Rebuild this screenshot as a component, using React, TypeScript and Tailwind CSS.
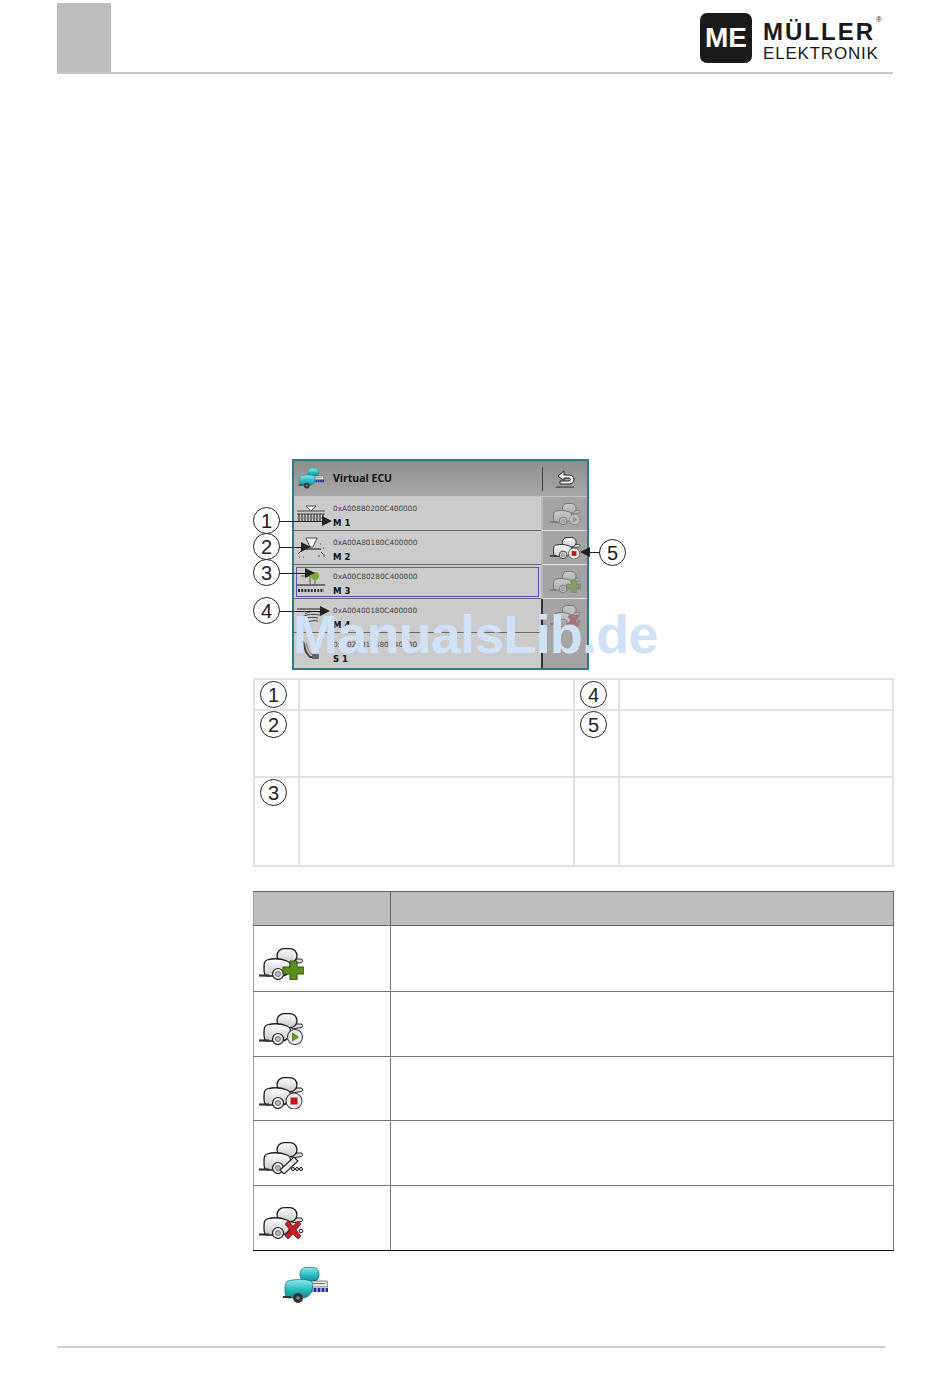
import React from "react";

type Badge = "plus" | "play" | "stop" | "machine" | "cross" | "none";

// grey tank used in the softkeys and the icon table
const TankIcon: React.FC<{ badge?: Badge; className?: string }> = ({ badge = "none", className }) => (
  <svg viewBox="0 0 45 32" className={className}>
    <defs>
      <linearGradient id="greyTank" x1="0" y1="0" x2="0" y2="1">
        <stop offset="0" stopColor="#ffffff" />
        <stop offset="1" stopColor="#c8c8c8" />
      </linearGradient>
    </defs>
    <path d="M31 11h11c2 0 2 3 .5 3.500L33 16z" fill="#ddd" stroke="#222" strokeWidth="1" />
    <rect x="18" y="0.700" width="20" height="14" rx="7" fill="url(#greyTank)" stroke="#1c1c1c" strokeWidth="1.300" />
    <path d="M8 12c7-2 15-1 20 1 3 1 4 4 3 7-1 5-4 8-9 8H8c-2 0-3-2-3-7 0-5 0-8 3-9z" fill="url(#greyTank)" stroke="#1c1c1c" strokeWidth="1.300" />
    <path d="M0 27.500h10" stroke="#333" strokeWidth="2.200" />
    <circle cx="19" cy="26" r="5.500" fill="#e4e4e4" stroke="#222" strokeWidth="1.200" />
    <circle cx="19" cy="26" r="2.500" fill="#bbb" stroke="#666" strokeWidth="0.8" />
    {badge === "plus" && (
      <path d="M31 13h7v6h7v7h-7v6h-7v-6h-7v-7h7z" fill="#5c8f1c" stroke="#2f5208" strokeWidth="1" />
    )}
    {badge === "play" && (
      <>
        <circle cx="36" cy="24" r="7.500" fill="#ececec" stroke="#444" strokeWidth="1.100" />
        <path d="M33.500 20l6 4-6 4z" fill="#6a9a22" stroke="#3b5f10" strokeWidth="0.6" />
      </>
    )}
    {badge === "stop" && (
      <>
        <circle cx="35" cy="24" r="8" fill="#efefef" stroke="#444" strokeWidth="1.100" />
        <rect x="31.500" y="20.500" width="7" height="7" fill="#c4161c" />
      </>
    )}
    {badge === "machine" && (
      <>
        <path d="M21 28l14-13 4 4-14 13z" fill="#ededed" stroke="#222" strokeWidth="1.100" />
        <circle cx="34" cy="27" r="1.500" fill="none" stroke="#111" strokeWidth="1" />
        <circle cx="38" cy="27" r="1.500" fill="none" stroke="#111" strokeWidth="1" />
        <circle cx="42" cy="27" r="1.500" fill="none" stroke="#111" strokeWidth="1" />
      </>
    )}
    {badge === "cross" && (
      <>
        <circle cx="42" cy="24" r="1.800" fill="none" stroke="#111" strokeWidth="1" />
        <path d="M26 17l3-3 5 5 5-5 3 3-5 6 5 6-3 3-5-5-5 5-3-3 5-6z" fill="#c4202a" stroke="#7c1016" strokeWidth="0.7" />
      </>
    )}
  </svg>
);

// teal tank with boom, app symbol
const ColorTank: React.FC<{ className?: string }> = ({ className }) => (
  <svg viewBox="0 0 45 37" className={className}>
    <defs>
      <linearGradient id="tealTank" x1="0" y1="0" x2="0" y2="1">
        <stop offset="0" stopColor="#8fe8ea" />
        <stop offset="0.5" stopColor="#2cc0c6" />
        <stop offset="1" stopColor="#0f8a92" />
      </linearGradient>
    </defs>
    <rect x="17" y="0.500" width="19" height="14" rx="6" fill="url(#tealTank)" stroke="#0d6f76" strokeWidth="0.7" />
    <path d="M26 14h18l1 6H26z" fill="#e6e6da" stroke="#555" strokeWidth="0.7" />
    <path d="M29 16.500h13" stroke="#777" strokeWidth="1" />
    <path d="M28 21v4M32 21v4M36 21v4M40 21v4M44 21v4" stroke="#1c2fa0" strokeWidth="3" />
    <path d="M5 14c7-2 18-2 23 0 2 1 2 5 1 9-1 5-5 8-10 8H7c-3 0-5-1-5-7 0-5 0-9 3-10z" fill="url(#tealTank)" stroke="#0d6f76" strokeWidth="0.7" />
    <path d="M0 30h8" stroke="#333" strokeWidth="2" />
    <circle cx="15" cy="31" r="5" fill="#333" />
    <circle cx="15" cy="31" r="1.800" fill="#888" />
  </svg>
);

const SeederIcon = () => (
  <svg viewBox="0 0 28 18" className="h-[18px] w-[28px]">
    <path d="M9 1h10l-5 5z" fill="#eee" stroke="#333" strokeWidth="0.8" />
    <path d="M0 6h28M0 9h28" stroke="#444" strokeWidth="1" />
    <path d="M2 9v8M5 9v8M8 9v8M11 9v8M14 9v8M17 9v8M20 9v8M23 9v8M26 9v8" stroke="#333" strokeWidth="1.200" />
    <path d="M0 13h28" stroke="#888" strokeWidth="1" />
  </svg>
);

const SpreaderIcon = () => (
  <svg viewBox="0 0 28 22" className="h-[22px] w-[28px]">
    <path d="M9 1h11l-4 9h-3z" fill="#f2f2f2" stroke="#444" strokeWidth="0.9" />
    <path d="M6 12h18" stroke="#444" strokeWidth="1.400" />
    <path d="M1 17l3-3M2 20h1M23 7h1M26 11h1M24 15l2 2M27 17v3M21 19h2M6 20h1" stroke="#444" strokeWidth="1" />
  </svg>
);

const TreeRowIcon = () => (
  <svg viewBox="0 0 28 22" className="h-[22px] w-[28px]">
    <circle cx="18" cy="5" r="4" fill="#78a92e" />
    <path d="M18 9v4M4 5h9v8" stroke="#555" strokeWidth="0.9" fill="none" />
    <path d="M0 14h28" stroke="#444" strokeWidth="1.400" />
    <path d="M1 19.500h26" stroke="#333" strokeWidth="3" strokeDasharray="2 1.200" />
  </svg>
);

const PloughIcon = () => (
  <svg viewBox="0 0 28 18" className="h-[18px] w-[28px]">
    <path d="M0 2h24" stroke="#777" strokeWidth="2" />
    <path d="M8 7c5-3 10-3 15-2M5 10c5-3 12-3 18-2M4 13c5-3 12-3 17-2M8 16c5-2 10-3 13-2" fill="none" stroke="#444" strokeWidth="1" />
  </svg>
);

const ArmIcon = () => (
  <svg viewBox="0 0 18 20" className="h-[20px] w-[18px]">
    <path d="M1 1l3 11 4 5h8" fill="none" stroke="#444" strokeWidth="2" />
    <path d="M4 3l3 9 4 3" fill="none" stroke="#888" strokeWidth="1.200" />
    <rect x="10" y="14" width="7" height="5" fill="#666" />
  </svg>
);

const BackIcon = () => (
  <svg viewBox="0 0 20 18" className="h-[18px] w-[20px]">
    <path d="M1 16.500h18" stroke="#222" strokeWidth="2" />
    <path d="M1 16h18" stroke="#f4f4f4" strokeWidth="0.800" />
    <path d="M9 1L3 6l6 4.500V8h4c2 0 2.500 1 2.500 1.500S15 11 13 11H5v3h9c3 0 5-2 5-4.500S17 5 14 5H9z" fill="#f4f4f4" stroke="#222" strokeWidth="1" />
  </svg>
);

const Num: React.FC<{ n: number; className?: string }> = ({ n, className }) => (
  <div className={`flex size-[27px] items-center justify-center rounded-full border border-[#222] bg-white font-['Liberation_Sans',sans-serif] text-[20px] leading-none text-[#222] ${className ?? ""}`}>
    {n}
  </div>
);

const ArrowHead: React.FC<{ className: string; left?: boolean }> = ({ className, left }) => (
  <svg viewBox="0 0 10 10" className={className}>
    <path d={left ? "M10 0v10L0 5z" : "M0 0v10l10-5z"} fill="#222" />
  </svg>
);

const rows = [
  { hex: "0xA00880200C400000", name: "M 1", icon: <SeederIcon /> },
  { hex: "0xA00A80180C400000", name: "M 2", icon: <SpreaderIcon /> },
  { hex: "0xA00C80280C400000", name: "M 3", icon: <TreeRowIcon />, selected: true },
  { hex: "0xA00400180C400000", name: "M 4", icon: <PloughIcon /> },
  { hex: "0xA020012480C40000", name: "S 1", icon: <ArmIcon /> },
];

const Screen = () => (
  <div className="ml-[39px] flex h-[211px] w-[297px] flex-col border-2 border-[#2a7f86]">
    <div className="flex h-[36px] items-center border-b border-[#c4c4c4] bg-gradient-to-b from-[#8e8e8e] to-[#a8a8a8]">
      <div className="mr-[5px] flex w-[34px] justify-center">
        <ColorTank className="h-[21px] w-[28px]" />
      </div>
      <div className="flex-1 font-['Open_Sans',sans-serif] text-[10.500px] font-bold text-[#111]">Virtual ECU</div>
      <div className="h-[24px] w-px bg-[#444]" />
      <div className="flex w-[44px] justify-center">
        <BackIcon />
      </div>
    </div>
    <div className="flex flex-1">
      <div className="flex flex-1 flex-col bg-[#cbcbcb]">
        {rows.map((r, i) => (
          <div
            key={r.name}
            className={`flex h-[34px] items-center ${i < 4 ? "border-b border-[#6a6a6a]" : ""} ${r.selected ? "outline outline-1 -outline-offset-3 outline-[#5b54c4]" : ""}`}
          >
            <div className="mr-[5px] flex w-[34px] justify-center">{r.icon}</div>
            <div className="flex flex-col pt-[4px]">
              <div className="font-['DejaVu_Sans',sans-serif] text-[7.300px] leading-[10px] text-[#444]">{r.hex}</div>
              <div className="mt-[4px] font-['DejaVu_Sans',sans-serif] text-[8.500px] font-bold leading-[10px] text-[#111]">{r.name}</div>
            </div>
          </div>
        ))}
      </div>
      <div className="flex w-[46px] flex-col bg-[#a5a3a3]">
        <div className="flex h-[34px] items-center justify-center border-b border-l-2 border-b-[#dedede] border-l-[#b8b8b8]">
          <TankIcon badge="play" className="h-[22px] w-[31px] opacity-40" />
        </div>
        <div className="flex h-[34px] items-center justify-center border-b border-l-2 border-b-[#dedede] border-l-[#b8b8b8]">
          <TankIcon badge="stop" className="h-[22px] w-[31px]" />
        </div>
        <div className="flex h-[34px] items-center justify-center border-b border-l-2 border-b-[#dedede] border-l-[#b8b8b8]">
          <TankIcon badge="plus" className="h-[22px] w-[31px] opacity-40" />
        </div>
        <div className="flex flex-1 flex-col border-l-2 border-l-[#333]">
          <div className="flex h-[34px] items-center justify-center">
            <TankIcon badge="cross" className="h-[22px] w-[31px] opacity-40" />
          </div>
        </div>
      </div>
    </div>
  </div>
);

const Callouts = () => (
  <>
    <Num n={1} className="absolute left-0 top-[48px]" />
    <div className="absolute left-[26px] top-[62px] h-px w-[44px] bg-[#222]" />
    <ArrowHead className="absolute left-[69px] top-[57px] size-[10px]" />

    <Num n={2} className="absolute left-0 top-[74px]" />
    <div className="absolute left-[26px] top-[88px] h-px w-[23px] bg-[#222]" />
    <ArrowHead className="absolute left-[48px] top-[83px] size-[10px]" />

    <Num n={3} className="absolute left-0 top-[100px]" />
    <div className="absolute left-[26px] top-[114px] h-px w-[27px] bg-[#222]" />
    <ArrowHead className="absolute left-[52px] top-[109px] size-[10px]" />

    <Num n={4} className="absolute left-0 top-[138px]" />
    <div className="absolute left-[26px] top-[152px] h-px w-[42px] bg-[#222]" />
    <ArrowHead className="absolute left-[67px] top-[147px] size-[10px]" />

    <Num n={5} className="absolute left-[346px] top-[80px]" />
    <div className="absolute left-[336px] top-[93px] h-px w-[11px] bg-[#222]" />
    <ArrowHead left className="absolute left-[327px] top-[88px] size-[10px]" />
  </>
);

const Legend = () => (
  <table className="mt-[8px] w-[641px] table-fixed border-collapse">
    <colgroup>
      <col className="w-[45px]" />
      <col className="w-[275px]" />
      <col className="w-[45px]" />
      <col />
    </colgroup>
    <tbody>
      <tr className="h-[31px]">
        <td className="border-2 border-[#e2e2e2] pl-[5px] pt-[1px] align-top"><Num n={1} /></td>
        <td className="border-2 border-[#e2e2e2]" />
        <td className="border-2 border-[#e2e2e2] pl-[5px] pt-[1px] align-top"><Num n={4} /></td>
        <td className="border-2 border-[#e2e2e2]" />
      </tr>
      <tr className="h-[67px]">
        <td className="border-2 border-[#e2e2e2] pl-[5px] align-top"><Num n={2} /></td>
        <td className="border-2 border-[#e2e2e2]" />
        <td className="border-2 border-[#e2e2e2] pl-[5px] align-top"><Num n={5} /></td>
        <td className="border-2 border-[#e2e2e2]" />
      </tr>
      <tr className="h-[89px]">
        <td className="border-2 border-[#e2e2e2] pl-[5px] pt-[1px] align-top"><Num n={3} /></td>
        <td className="border-2 border-[#e2e2e2]" />
        <td className="border-2 border-[#e2e2e2]" />
        <td className="border-2 border-[#e2e2e2]" />
      </tr>
    </tbody>
  </table>
);

const iconRows: { badge: Badge; h: string }[] = [
  { badge: "plus", h: "h-[66px]" },
  { badge: "play", h: "h-[65px]" },
  { badge: "stop", h: "h-[64px]" },
  { badge: "machine", h: "h-[65px]" },
  { badge: "cross", h: "h-[65px]" },
];

const IconTable = () => (
  <table className="mt-[24px] w-[641px] table-fixed border-collapse">
    <colgroup>
      <col className="w-[137px]" />
      <col />
    </colgroup>
    <thead>
      <tr className="h-[34px] bg-[#bdbdbd]">
        <th className="border border-[#666] border-l-[#a0a0a0]" />
        <th className="border border-[#666]" />
      </tr>
    </thead>
    <tbody>
      {iconRows.map((r, i) => (
        <tr key={r.badge} className={r.h}>
          <td className={`border border-[#777] border-l-[#a0a0a0] pb-[11px] pl-[5px] align-bottom ${i === 4 ? "border-b-[#111]" : ""}`}>
            <TankIcon badge={r.badge} className="block h-[32px] w-[45px]" />
          </td>
          <td className={`border border-[#777] ${i === 4 ? "border-b-[#111]" : ""}`} />
        </tr>
      ))}
    </tbody>
  </table>
);

export default function App() {
  return (
    <div className="relative flex h-[1378px] w-[950px] flex-col overflow-hidden bg-white">
      <header className="ml-[57px] flex h-[74px] w-[836px] items-start justify-between border-b-2 border-[#c8c8c8]">
        <div className="mt-[3px] h-[69px] w-[54px] bg-[#bebebe]" />
        <div className="mr-[18px] mt-[13px] flex items-start gap-[11px]">
          <div className="flex h-[50px] w-[52px] items-center justify-center rounded-[7px] bg-[#1a1a1a] font-['Liberation_Sans',sans-serif] text-[28px] font-bold leading-none text-white">
            ME
          </div>
          <div className="relative flex w-[112px] flex-col font-['Liberation_Sans',sans-serif] text-[#1a1a1a]">
            <div className="mt-[7px] whitespace-nowrap text-[24px] font-bold leading-[24px] tracking-[2px]">MÜLLER</div>
            <div className="mt-[1px] whitespace-nowrap text-[17px] leading-[18px] tracking-[0.800px]">ELEKTRONIK</div>
            <span className="absolute -right-[7px] top-[3px] text-[8px] leading-none">®</span>
          </div>
        </div>
      </header>

      <main className="ml-[253px] mt-[385px] w-[641px]">
        <div className="relative">
          <Screen />
          <Callouts />
        </div>
        <Legend />
        <IconTable />
        <ColorTank className="ml-[30px] mt-[16px] h-[37px] w-[45px]" />
      </main>

      <footer className="mx-[57px] mb-[30px] mt-auto w-[828px] border-t-2 border-[#d0d0d0]" />

      {/* watermark sits over the screenshot */}
      <div className="absolute left-[293px] top-[604px] font-['Liberation_Sans',sans-serif] text-[54px] font-bold leading-[60px] tracking-[-0.800px] text-[#cfe2f8]">
        ManualsLib.de
      </div>
    </div>
  );
}
